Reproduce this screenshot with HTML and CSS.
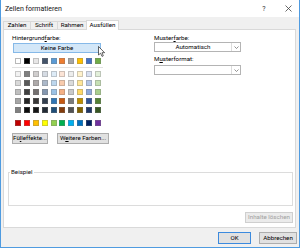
FILE: index.html
```html
<!DOCTYPE html>
<html lang="de">
<head>
<meta charset="utf-8">
<title>Zellen formatieren</title>
<link rel="stylesheet" href="styles.css">
</head>
<body>
<div class="window">
  <div class="titlebar">
    <span class="title">Zellen formatieren</span>
    <span class="help">?</span>
    <span class="close"><svg width="7" height="7" viewBox="0 0 7 7"><path d="M0.5 0.5L6.5 6.5M6.5 0.5L0.5 6.5" stroke="#444" stroke-width="0.8" fill="none"/></svg></span>
  </div>
  <div class="tabs">
    <div class="tab t1">Zahlen</div>
    <div class="tab t2">Schrift</div>
    <div class="tab t3">Rahmen</div>
    <div class="tab t4 active">Ausfüllen</div>
  </div>
  <div class="panel">
    <div class="top">
      <div class="left">
        <div class="label">Hintergrund<u>f</u>arbe:</div>
        <div class="nocolor">Keine Farbe</div>
        <div class="swatches theme">
          <span class="sw white" style="background:#FFFFFF"></span><span class="sw" style="background:#000000"></span><span class="sw" style="background:#E7E6E6"></span><span class="sw" style="background:#44546A"></span><span class="sw" style="background:#5B9BD5"></span><span class="sw" style="background:#ED7D31"></span><span class="sw" style="background:#A5A5A5"></span><span class="sw" style="background:#FFC000"></span><span class="sw" style="background:#4472C4"></span><span class="sw" style="background:#70AD47"></span>
        </div>
        <div class="sep"></div>
        <div class="swatches grid">
          <span class="sw" style="background:#F2F2F2"></span><span class="sw" style="background:#7F7F7F"></span><span class="sw" style="background:#D0CECE"></span><span class="sw" style="background:#D6DCE4"></span><span class="sw" style="background:#DDEBF7"></span><span class="sw" style="background:#FCE4D6"></span><span class="sw" style="background:#EDEDED"></span><span class="sw" style="background:#FFF2CC"></span><span class="sw" style="background:#D9E1F2"></span><span class="sw" style="background:#E2EFDA"></span>
          <span class="sw" style="background:#D9D9D9"></span><span class="sw" style="background:#595959"></span><span class="sw" style="background:#AEAAAA"></span><span class="sw" style="background:#ACB9CA"></span><span class="sw" style="background:#BDD7EE"></span><span class="sw" style="background:#F8CBAD"></span><span class="sw" style="background:#DBDBDB"></span><span class="sw" style="background:#FFE699"></span><span class="sw" style="background:#B4C6E7"></span><span class="sw" style="background:#C6E0B4"></span>
          <span class="sw" style="background:#BFBFBF"></span><span class="sw" style="background:#404040"></span><span class="sw" style="background:#757171"></span><span class="sw" style="background:#8497B0"></span><span class="sw" style="background:#9BC2E6"></span><span class="sw" style="background:#F4B084"></span><span class="sw" style="background:#C9C9C9"></span><span class="sw" style="background:#FFD966"></span><span class="sw" style="background:#8EA9DB"></span><span class="sw" style="background:#A9D08E"></span>
          <span class="sw" style="background:#A6A6A6"></span><span class="sw" style="background:#262626"></span><span class="sw" style="background:#3A3838"></span><span class="sw" style="background:#333F4F"></span><span class="sw" style="background:#2F75B5"></span><span class="sw" style="background:#C65911"></span><span class="sw" style="background:#7B7B7B"></span><span class="sw" style="background:#BF8F00"></span><span class="sw" style="background:#305496"></span><span class="sw" style="background:#548235"></span>
          <span class="sw" style="background:#808080"></span><span class="sw" style="background:#0D0D0D"></span><span class="sw" style="background:#161616"></span><span class="sw" style="background:#222B35"></span><span class="sw" style="background:#1F4E78"></span><span class="sw" style="background:#833C0C"></span><span class="sw" style="background:#525252"></span><span class="sw" style="background:#806000"></span><span class="sw" style="background:#203764"></span><span class="sw" style="background:#375623"></span>
        </div>
        <div class="swatches standard">
          <span class="sw" style="background:#C00000"></span><span class="sw" style="background:#FF0000"></span><span class="sw" style="background:#FFC000"></span><span class="sw" style="background:#FFFF00"></span><span class="sw" style="background:#92D050"></span><span class="sw" style="background:#00B050"></span><span class="sw" style="background:#00B0F0"></span><span class="sw" style="background:#0070C0"></span><span class="sw" style="background:#002060"></span><span class="sw" style="background:#7030A0"></span>
        </div>
        <div class="btnrow">
          <button class="btn fill">Fü<u>l</u>leffekte...</button>
          <button class="btn more">W<u>e</u>itere Farben...</button>
        </div>
      </div>
      <div class="right">
        <div class="label">Muster<u>f</u>arbe:</div>
        <div class="combo"><span class="combo-text">Automatisch</span><span class="combo-arrow"><svg width="5" height="3" viewBox="0 0 5 3"><path d="M0.5 0.5L2.5 2.5L4.5 0.5" stroke="#666" stroke-width="0.7" fill="none"/></svg></span></div>
        <div class="label label2">M<u>u</u>sterformat:</div>
        <div class="combo"><span class="combo-text"></span><span class="combo-arrow"><svg width="5" height="3" viewBox="0 0 5 3"><path d="M0.5 0.5L2.5 2.5L4.5 0.5" stroke="#666" stroke-width="0.7" fill="none"/></svg></span></div>
      </div>
    </div>
    <fieldset class="sample"><legend>Beispiel</legend></fieldset>
    <div class="clear-row"><button class="btn clear">Inhalte löschen</button></div>
  </div>
  <div class="footer">
    <button class="btn ok">OK</button>
    <button class="btn cancel">Abbrechen</button>
  </div>
  <svg class="cursor" width="8" height="12" viewBox="0 0 8 12"><path d="M0.5 0.5L0.5 9L2.6 7.2L4 10.4L5.3 9.8L4 6.7L6.6 6.7Z" fill="#fff" stroke="#000" stroke-width="0.6" stroke-linejoin="round"/></svg>
</div>
</body>
</html>
```
FILE: styles.css
```css
* { box-sizing: border-box; margin: 0; padding: 0; }
html, body { width: 300px; height: 248px; overflow: hidden; }
body {
  font-family: Roboto, "Liberation Sans", sans-serif;
  font-size: 6.2px;
  color: #000;
  background: #fff;
}
u { text-decoration-thickness: 0.5px; text-underline-offset: 1px; }

.window {
  position: relative;
  width: 300px;
  height: 248px;
  border: 1px solid #4f9be0;
  border-top: none;
  background: #f0f0f0;
  display: flex;
  flex-direction: column;
}

.titlebar {
  height: 17px;
  background: #fff;
  display: flex;
  align-items: center;
  padding-left: 4px;
  font-size: 7px;
  color: #111;
}
.title { flex: 1; }
.help { width: 22px; text-align: center; font-size: 7px; color: #333; margin-right: 2px; }
.close { width: 22px; display: flex; justify-content: center; align-items: center; }

.tabs {
  height: 12px;
  display: flex;
  align-items: flex-end;
  padding-left: 2px;
}
.tab {
  position: relative;
  height: 8px;
  border: 1px solid #d9d9d9;
  border-bottom: none;
  background: #f0f0f0;
  text-align: center;
  line-height: 7px;
  margin-left: -1px;
}
.t1 { width: 28px; margin-left: 0; }
.t2 { width: 28px; }
.t3 { width: 30px; }
.t4 { width: 33px; }
.tab.active {
  height: 10px;
  background: #fff;
  margin-bottom: -1px;
  z-index: 1;
  line-height: 9px;
}

.panel {
  height: 199px;
  margin: 0 3px 0 2px;
  background: #fff;
  border: 1px solid #d9d9d9;
  padding: 4px 2px 0 4px;
}
.top { display: flex; padding-left: 4px; height: 110px; }
.left { width: 142px; }
.label { height: 8px; line-height: 8px; }

.nocolor {
  margin: 1px 0 0 1px;
  width: 88px;
  height: 10px;
  background: #d3e7f8;
  border: 1px solid #86b9e8;
  text-align: center;
  line-height: 8px;
}

.swatches {
  display: grid;
  grid-template-columns: repeat(10, 6px);
  column-gap: 2.9px;
  row-gap: 3px;
  margin-left: 3px;
}
.sw {
  display: block;
  width: 6px;
  height: 6px;
  border: 0.5px solid rgba(120, 120, 120, 0.35);
}
.sw.white { border-color: #b9b9b9; }
.theme { margin-top: 5px; }
.sep { margin-top: 3px; width: 91px; height: 1px; background: #e2e2e2; }
.grid { margin-top: 3px; }
.standard { margin-top: 7px; }

.btnrow { margin-top: 7px; display: flex; gap: 9px; }
.btn {
  font-family: inherit;
  font-size: 6.2px;
  color: #000;
  background: #e1e1e1;
  border: 1px solid #adadad;
  height: 11px;
  line-height: 9px;
  text-align: center;
  padding: 0;
}
.fill { width: 36px; }
.more { width: 52px; }

.right { width: 87px; }
.combo {
  height: 10px;
  width: 87px;
  border: 1px solid #b4b4b4;
  background: #fff;
  display: flex;
}
.combo-text { flex: 1; text-align: center; line-height: 8px; }
.combo-arrow {
  width: 9px;
  border-left: 1px solid #dcdcdc;
  display: flex;
  align-items: center;
  justify-content: center;
}
.label2 { margin-top: 3px; }
.label2 + .combo { margin-top: 2px; }

.sample {
  margin-top: 24px;
  height: 38px;
  border: 1px solid #dcdcdc;
}
.sample legend {
  margin-left: 1px;
  padding: 0 1px;
  line-height: 8px;
  color: #111;
}

.clear-row { display: flex; justify-content: flex-end; margin-top: 6px; }
.clear { width: 48px; color: #a0a0a0; background: #ebebeb; border-color: #cfcfcf; }

.footer {
  display: flex;
  justify-content: flex-end;
  gap: 8px;
  padding: 4px 2px 0 0;
}
.ok { width: 33px; height: 12px; line-height: 10px; border-color: #3b8ade; }
.cancel { width: 38px; height: 12px; line-height: 10px; }

.cursor { position: absolute; left: 97px; top: 46px; }
```
